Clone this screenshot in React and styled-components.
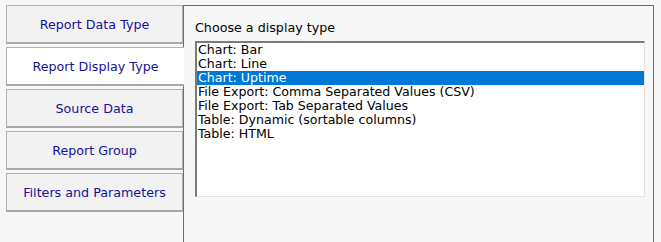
import React, { useState } from 'react';
import styled, { createGlobalStyle } from 'styled-components';

const GlobalStyle = createGlobalStyle`
    html, body {
        margin: 0;
        padding: 0;
        background: #f7f7f7;
        overflow: hidden;
    }
`;

const Page = styled.div`
    display: flex;
    align-items: stretch;
    height: 242px;
    padding: 5px 0 0 6px;
    box-sizing: border-box;
    font-family: "DejaVu Sans", Verdana, sans-serif;
`;

const TabList = styled.div`
    display: flex;
    flex-direction: column;
    gap: 3px;
    width: 177px;
    flex-shrink: 0;
`;

const Tab = styled.div`
    position: relative;
    z-index: ${p => (p.$active ? 1 : 0)};
    height: 39px;
    box-sizing: border-box;
    margin-right: ${p => (p.$active ? '-1px' : '0')};
    display: flex;
    align-items: center;
    justify-content: center;
    background: ${p => (p.$active ? '#ffffff' : '#f2f2f2')};
    border: 1px solid #b0b0b0;
    border-bottom: 2px solid #a8a8a8;
    border-right: ${p => (p.$active ? 'none' : '1px solid #b0b0b0')};
    color: #16119b;
    font-size: 12.7px;
    cursor: pointer;
`;

const Panel = styled.div`
    flex: 0 0 471px;
    box-sizing: border-box;
    background: #f7f7f7;
    border: 1px solid #6e6e6e;
    border-bottom: none;
    padding: 14px 8px 0 11px;
`;

const Label = styled.div`
    font-size: 12.7px;
    line-height: 15px;
    color: #000;
    margin-bottom: 6px;
`;

const ListBox = styled.div`
    width: 450px;
    height: 156px;
    box-sizing: border-box;
    background: #fff;
    border-style: solid;
    border-width: 2px 1px 1px 2px;
    border-color: #7a7a7a #e3e3e3 #e3e3e3 #7a7a7a;
    overflow: hidden;
`;

const Option = styled.div`
    height: 14px;
    line-height: 14px;
    padding-left: 1px;
    font-size: 12.6px;
    white-space: nowrap;
    background: ${p => (p.$selected ? '#0078d7' : 'transparent')};
    color: ${p => (p.$selected ? '#fff' : '#000')};
`;

const tabs = [
    'Report Data Type',
    'Report Display Type',
    'Source Data',
    'Report Group',
    'Filters and Parameters',
];

const options = [
    'Chart: Bar',
    'Chart: Line',
    'Chart: Uptime',
    'File Export: Comma Separated Values (CSV)',
    'File Export: Tab Separated Values',
    'Table: Dynamic (sortable columns)',
    'Table: HTML',
];

export default function App() {
    const [activeTab, setActiveTab] = useState(1);
    const [selected, setSelected] = useState(2);

    return (
        <>
            <GlobalStyle />
            <Page>
                <TabList>
                    {tabs.map((t, i) => (
                        <Tab key={t} $active={i === activeTab} onClick={() => setActiveTab(i)}>
                            {t}
                        </Tab>
                    ))}
                </TabList>
                <Panel>
                    <Label>Choose a display type</Label>
                    <ListBox>
                        {options.map((o, i) => (
                            <Option key={o} $selected={i === selected} onClick={() => setSelected(i)}>
                                {o}
                            </Option>
                        ))}
                    </ListBox>
                </Panel>
            </Page>
        </>
    );
}
